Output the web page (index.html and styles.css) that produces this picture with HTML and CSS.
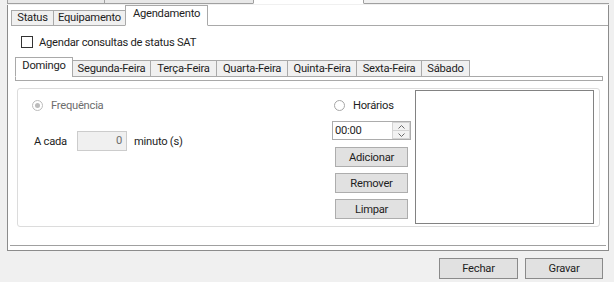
FILE: index.html
```html
<!DOCTYPE html>
<html lang="pt-BR">
<head>
  <meta charset="UTF-8">
  <title>Configurações SAT</title>
  <link rel="stylesheet" href="styles.css">
</head>
<body>
  <div class="outer">
    <!-- top tab strip, mostly scrolled out of view -->
    <div class="outer-strip">
      <div class="otab"></div>
      <div class="otab wide"></div>
      <div class="otab active"></div>
      <div class="strip-fill"></div>
    </div>

    <div class="outer-body">
      <div class="tabs">
        <div class="tab t-status">Status</div>
        <div class="tab t-equip">Equipamento</div>
        <div class="tab active t-agenda">Agendamento</div>
        <div class="strip-fill"></div>
      </div>

      <label class="check"><span class="box"></span>Agendar consultas de status SAT</label>

      <div class="days">
        <div class="day-strip">
          <div class="tab active d-dom">Domingo</div>
          <div class="tab d-seg">Segunda-Feira</div>
          <div class="tab d-ter">Terça-Feira</div>
          <div class="tab d-qua">Quarta-Feira</div>
          <div class="tab d-qui">Quinta-Feira</div>
          <div class="tab d-sex">Sexta-Feira</div>
          <div class="tab d-sab">Sábado</div>
          <div class="strip-fill"></div>
        </div>
        <div class="day-panel"></div>
      </div>

      <div class="grp">
        <div class="freq">
          <div class="radio-row disabled">
            <span class="radio checked"></span>Frequência
          </div>
          <div class="every">
            <span class="every-label">A cada</span>
            <span class="num">0</span>
            <span class="unit">minuto (s)</span>
          </div>
        </div>

        <div class="times">
          <div class="radio-row">
            <span class="radio"></span>Horários
          </div>
          <div class="time-input">
            <span class="time-text">00:00</span>
            <span class="spin">
              <span class="spin-btn">
                <svg width="7" height="4" viewBox="0 0 7 4"><path d="M0.5 3.5 L3.5 0.5 L6.5 3.5" fill="none" stroke="#6a6a6a" stroke-width="1"/></svg>
              </span>
              <span class="spin-btn">
                <svg width="7" height="4" viewBox="0 0 7 4"><path d="M0.5 0.5 L3.5 3.5 L6.5 0.5" fill="none" stroke="#6a6a6a" stroke-width="1"/></svg>
              </span>
            </span>
          </div>
          <button class="btn small">Adicionar</button>
          <button class="btn small">Remover</button>
          <button class="btn small">Limpar</button>
        </div>

        <div class="list"></div>
      </div>

      <div class="inner-bottom"></div>
    </div>
  </div>

  <div class="actions">
    <button class="btn big">Fechar</button>
    <button class="btn big gravar">Gravar</button>
  </div>
</body>
</html>
```

FILE: styles.css
```css
* {
  margin: 0;
  padding: 0;
  box-sizing: border-box;
}

body {
  font-family: Roboto, "Liberation Sans", Arial, sans-serif;
  font-size: 11.2px;
  letter-spacing: -0.25px;
  color: #1e1e1e;
  background-color: #f0f0f0;
  width: 614px;
  height: 282px;
  overflow: hidden;
}

/* outer tab control */
.outer {
  margin-left: 7px;
  width: 602px;
}

.outer-strip {
  display: flex;
  height: 4px;
}

.otab {
  width: 98px;
  height: 4px;
  border: 1px solid #a0a0a0;
  border-top: none;
  background-color: #e8e8e8;
}

.otab + .otab {
  margin-left: -1px;
}

.otab.wide {
  width: 150px;
}

.otab.active {
  width: 111px;
  background-color: #fff;
  border-bottom-color: #fff;
}

.strip-fill {
  flex: 1;
  border-bottom: 1px solid #a0a0a0;
}

.outer-body {
  height: 246px;
  background-color: #fff;
  border: 1px solid #8c8c8c;
  border-top: none;
}

/* inner tabs */
.tabs {
  display: flex;
  align-items: flex-end;
  height: 21px;
  margin: 1px 0 0 3px;
}

.tab {
  height: 16px;
  border: 1px solid #a9a9a9;
  background-color: #f0f0f0;
  text-align: center;
  line-height: 14px;
  white-space: nowrap;
}

.tab + .tab {
  margin-left: -1px;
}

.tab.active {
  height: 21px;
  line-height: 16px;
  background-color: #fff;
  border-bottom-color: #fff;
}

.t-status { width: 43px; }
.t-equip { width: 73px; }
.t-agenda { width: 83px; }

.tabs .strip-fill,
.day-strip .strip-fill {
  align-self: stretch;
  border-bottom-color: #a9a9a9;
}

/* checkbox */
.check {
  display: flex;
  align-items: center;
  gap: 6px;
  height: 12px;
  margin: 10px 0 0 13px;
}

.box {
  width: 12px;
  height: 12px;
  border: 1px solid #333;
  background-color: #fff;
}

/* weekday tabs */
.days {
  margin: 9px 0 0 7px;
  width: 588px;
}

.day-strip {
  display: flex;
  align-items: flex-end;
  height: 20px;
}

.day-strip .tab {
  height: 17px;
  line-height: 15px;
}

.day-strip .tab.active {
  height: 20px;
  line-height: 16px;
}

.d-dom { width: 58px; }
.d-seg { width: 79px; }
.d-ter { width: 67px; }
.d-qua { width: 72px; }
.d-qui { width: 70px; }
.d-sex { width: 66px; }
.d-sab { width: 49px; }

.day-panel {
  height: 4px;
  border: 1px solid #a9a9a9;
  border-top: none;
}

/* group box */
.grp {
  display: flex;
  width: 583px;
  height: 139px;
  margin: 7px 0 0 9px;
  padding: 1px 5px 2px 0;
  border: 1px solid #dcdcdc;
  border-radius: 3px;
}

.freq {
  flex: 1;
  padding-left: 14px;
}

.radio-row {
  display: flex;
  align-items: center;
  gap: 8px;
  height: 13px;
  margin-top: 9px;
}

.radio-row.disabled {
  color: #6d6d6d;
}

.radio {
  position: relative;
  width: 11px;
  height: 11px;
  border: 1px solid #a6a6a6;
  border-radius: 50%;
  background-color: #fff;
}

.radio.checked {
  border-color: #bcbcbc;
}

.radio.checked::after {
  content: "";
  position: absolute;
  left: 2px;
  top: 2px;
  width: 5px;
  height: 5px;
  border-radius: 50%;
  background-color: #bcbcbc;
}

.every {
  display: flex;
  align-items: center;
  height: 20px;
  margin: 19px 0 0 2px;
}

.every-label {
  width: 43px;
}

.num {
  width: 50px;
  height: 20px;
  border: 1px solid #cccccc;
  background-color: #f0f0f0;
  color: #6d6d6d;
  text-align: right;
  padding-right: 4px;
  line-height: 18px;
}

.unit {
  margin-left: 7px;
}

.times {
  width: 79px;
  margin-right: 4px;
}

.times .radio-row {
  padding-left: 2px;
}

.time-input {
  display: flex;
  align-items: center;
  justify-content: space-between;
  height: 19px;
  margin-top: 9px;
  border: 1px solid #acacac;
  padding: 0 0 0 2px;
}

.time-text {
  line-height: 17px;
}

.spin {
  display: flex;
  flex-direction: column;
  width: 18px;
  height: 17px;
}

.spin-btn {
  flex: 1;
  display: flex;
  align-items: center;
  justify-content: center;
  border: 1px solid #d4d4d4;
  background-color: #f2f2f2;
}

.spin-btn + .spin-btn {
  border-top: none;
}

.btn {
  display: block;
  font-family: inherit;
  font-size: 11.2px;
  letter-spacing: -0.25px;
  color: #1e1e1e;
  background-color: #e1e1e1;
  border: 1px solid #adadad;
}

.btn.small {
  width: 73px;
  height: 20px;
  margin: 7px 0 0 3px;
}

.btn.small + .btn.small {
  margin-top: 6px;
}

.list {
  width: 179px;
  height: 134px;
  border: 1px solid #828282;
  background-color: #fff;
}

.inner-bottom {
  height: 1px;
  margin: 18px 2px 0 2px;
  background-color: #a0a0a0;
}

/* dialog buttons */
.actions {
  display: flex;
  justify-content: flex-end;
  gap: 7px;
  margin: 7px 11px 0 0;
}

.btn.big {
  width: 79px;
  height: 21px;
  border-color: #8a8a8a;
}

.btn.gravar {
  width: 78px;
}
```
